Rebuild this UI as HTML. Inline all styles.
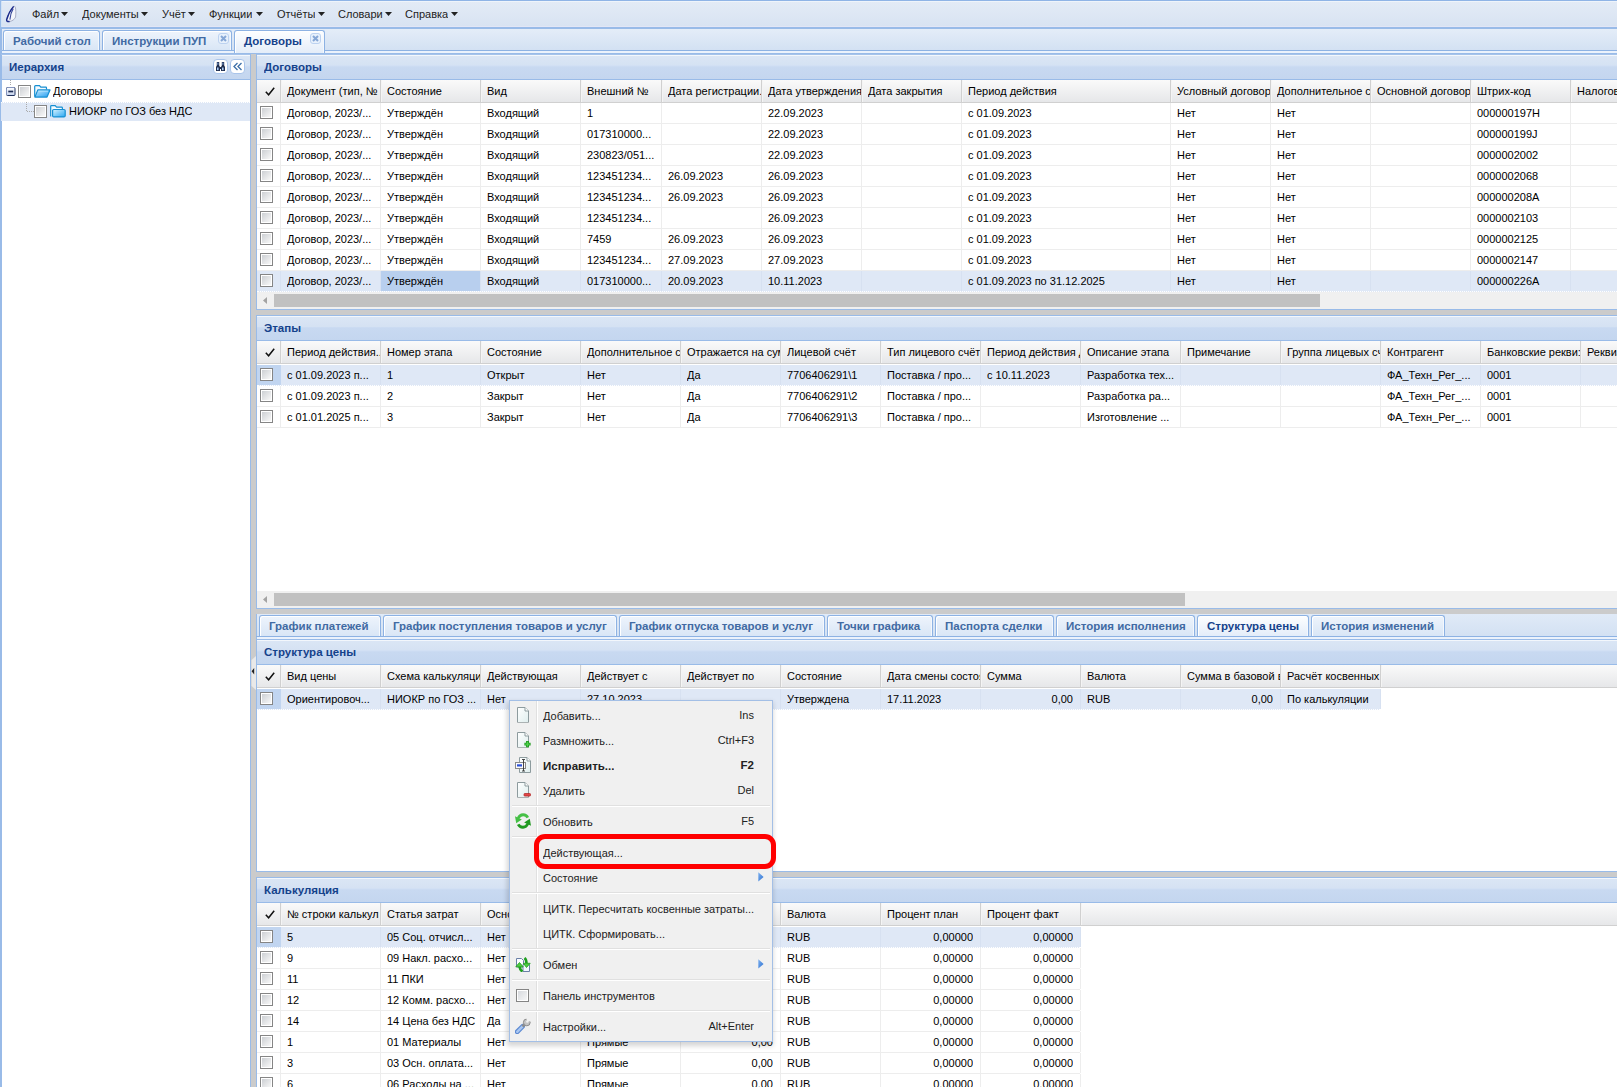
<!DOCTYPE html><html><head><meta charset="utf-8"><style>
*{box-sizing:border-box}
html,body{margin:0;padding:0}
body{width:1617px;height:1087px;overflow:hidden;position:relative;background:#cbcbcb;font-family:"Liberation Sans",sans-serif;font-size:11px;color:#000}
.a{position:absolute;overflow:hidden}
.t{position:absolute;white-space:nowrap;overflow:hidden}
.ph{background:linear-gradient(#dbe6f5 0,#d5e2f3 10.5px,#d2e0f4 10.5px,#c8d9f1 12px,#c4d6ef 100%);border-bottom:1px solid #99bbe8;box-shadow:inset 0 1px 0 #f3f7fc}
.ptitle{font-weight:bold;font-size:11.5px;color:#15428b}
.gh{background:linear-gradient(#fafafa,#e6e7e9);border-bottom:1px solid #d0d0d0}
.cb{position:absolute;width:13px;height:13px;border:1px solid #858585;background:linear-gradient(135deg,#cdd0d4 10%,#f8f8f8 90%);box-shadow:inset 0 0 0 1px #fff}
.tab{position:absolute;border:1px solid #8db2e3;border-bottom:none;border-radius:3px 3px 0 0;background:linear-gradient(#eef4fc,#d9e6f6);box-shadow:inset 1px 1px 0 #fff,inset -1px 0 0 #f4f8fd}
.tabt{position:absolute;font-weight:bold;font-size:11.5px;color:#416aa3;white-space:nowrap}
.sep{position:absolute;height:1px;background:#e0e0e0}
</style></head><body><div class="a" style="left:0px;top:0px;width:1617px;height:27px;background:linear-gradient(#e3ebf6,#d8e3f2);border-top:1px solid #8fb4e6;box-shadow:inset 0 1px 0 #eef4fb,inset 0 -1px 0 #e2e6f6"></div>
<div class="a" style="left:0px;top:27px;width:1617px;height:2px;background:#99bbe8"></div>
<svg class="a" style="left:0;top:0" width="24" height="26" viewBox="0 0 24 26"><path d="M13.8 6.2C11 9 8 14 6.5 20Q6.3 21.9 9 21.6C12 21.2 14.6 19.6 15.6 17C16 13 15.9 9.5 15.3 7.2Q14.9 6 13.8 6.2Z" fill="#f4f6fb" stroke="#a0a6bf" stroke-width="0.9"/><path d="M13.6 6.4C11 9.5 8 14.5 6.6 19.8Q6.4 21.9 9.6 21.5" fill="none" stroke="#1b2b8c" stroke-width="1.4"/><path d="M13.2 8.6C11.6 11.2 10.2 15 9.9 19.6" fill="none" stroke="#3a4b9c" stroke-width="1.1"/></svg>
<div class="t" style="left:32px;top:7px;line-height:14px;color:#222">Файл</div>
<svg class="a" style="left:61px;top:12px" width="7" height="4"><path d="M0 0H7L3.5 4Z" fill="#222"/></svg>
<div class="t" style="left:82px;top:7px;line-height:14px;color:#222">Документы</div>
<svg class="a" style="left:141px;top:12px" width="7" height="4"><path d="M0 0H7L3.5 4Z" fill="#222"/></svg>
<div class="t" style="left:162px;top:7px;line-height:14px;color:#222">Учёт</div>
<svg class="a" style="left:188px;top:12px" width="7" height="4"><path d="M0 0H7L3.5 4Z" fill="#222"/></svg>
<div class="t" style="left:209px;top:7px;line-height:14px;color:#222">Функции</div>
<svg class="a" style="left:256px;top:12px" width="7" height="4"><path d="M0 0H7L3.5 4Z" fill="#222"/></svg>
<div class="t" style="left:277px;top:7px;line-height:14px;color:#222">Отчёты</div>
<svg class="a" style="left:318px;top:12px" width="7" height="4"><path d="M0 0H7L3.5 4Z" fill="#222"/></svg>
<div class="t" style="left:338px;top:7px;line-height:14px;color:#222">Словари</div>
<svg class="a" style="left:385px;top:12px" width="7" height="4"><path d="M0 0H7L3.5 4Z" fill="#222"/></svg>
<div class="t" style="left:405px;top:7px;line-height:14px;color:#222">Справка</div>
<svg class="a" style="left:451px;top:12px" width="7" height="4"><path d="M0 0H7L3.5 4Z" fill="#222"/></svg>
<div class="a" style="left:0px;top:29px;width:1617px;height:21px;background:linear-gradient(#e4edf8,#d3e1f3)"></div>
<div class="a" style="left:0px;top:50px;width:1617px;height:1px;background:#8db2e3"></div>
<div class="a" style="left:0px;top:51px;width:1617px;height:2px;background:#ebf2fc"></div>
<div class="a" style="left:0px;top:53px;width:1617px;height:1px;background:#99bbe8"></div>
<div class="tab" style="left:3px;top:30px;width:97px;height:20px;"></div>
<div class="tabt" style="left:13px;top:34px;line-height:14px;">Рабочий стол</div>
<div class="tab" style="left:102px;top:30px;width:130px;height:20px;"></div>
<div class="tabt" style="left:112px;top:34px;line-height:14px;">Инструкции ПУП</div>
<svg class="a" style="left:218px;top:33px" width="11" height="11"><rect x="0.5" y="0.5" width="10" height="10" rx="2.5" fill="#e8f1fc" stroke="#bcd2f0"/><path d="M3 3L8 8M8 3L3 8" stroke="#86a7d6" stroke-width="2"/></svg>
<div class="tab" style="left:234px;top:30px;width:91px;height:23px;background:linear-gradient(#fdfeff,#e4edf9);"></div>
<div class="tabt" style="left:244px;top:34px;line-height:14px;color:#15428b;">Договоры</div>
<svg class="a" style="left:310px;top:33px" width="11" height="11"><rect x="0.5" y="0.5" width="10" height="10" rx="2.5" fill="#e8f1fc" stroke="#bcd2f0"/><path d="M3 3L8 8M8 3L3 8" stroke="#86a7d6" stroke-width="2"/></svg>
<div class="a" style="left:0px;top:0px;width:2px;height:1087px;background:#99bbe8"></div>
<div class="a" style="left:1px;top:1px;width:1px;height:26px;background:#d2e3f6"></div>
<div class="a" style="left:1px;top:54px;width:249px;height:1px;background:#a6c3ea"></div>
<div class="a ph" style="left:2px;top:55px;width:248px;height:25px;"></div>
<div class="t ptitle" style="left:9px;top:60px;line-height:14px">Иерархия</div>
<div class="a" style="left:213px;top:59px;width:15px;height:15px;background:#fff;border:1px solid #a9c4ea;border-radius:4px"></div>
<div class="a" style="left:230px;top:59px;width:15px;height:15px;background:#fff;border:1px solid #a9c4ea;border-radius:4px"></div>
<svg class="a" style="left:215px;top:61px" width="11" height="11" viewBox="0 0 11 11"><path d="M1.8 1H4.2V4.5L5 6V10H1V6L1.8 4.5Z" fill="#1f2d4d"/><path d="M6.8 1H9.2V4.5L10 6V10H6V6L6.8 4.5Z" fill="#1f2d4d"/><rect x="5" y="6" width="1" height="2" fill="#1f2d4d"/><rect x="2" y="6.5" width="1.6" height="2.6" fill="#a6c8f4"/><rect x="7" y="6.5" width="1.6" height="2.6" fill="#a6c8f4"/><rect x="2.4" y="1.6" width="1" height="2.2" fill="#7fa6e0"/><rect x="7.4" y="1.6" width="1" height="2.2" fill="#7fa6e0"/></svg>
<svg class="a" style="left:233px;top:62px" width="10" height="9" viewBox="0 0 10 9"><path d="M4.5 1L1 4.5L4.5 8M8.5 1L5 4.5L8.5 8" fill="none" stroke="#3d6fa8" stroke-width="1.3"/></svg>
<div class="a" style="left:2px;top:80px;width:248px;height:1007px;background:#fff"></div>
<div class="a" style="left:250px;top:53px;width:1px;height:1034px;background:#99bbe8"></div>
<div class="a" style="left:1px;top:102px;width:249px;height:19px;background:#dfe8f6;border-top:1px dotted #fff"></div>
<svg class="a" style="left:5px;top:80px" width="12" height="20"><defs><linearGradient id="mg" x1="0" y1="0" x2="0" y2="1"><stop offset="0" stop-color="#ffffff"/><stop offset="1" stop-color="#c3d1ec"/></linearGradient></defs><path d="M5.5 0V6" stroke="#aaa" stroke-dasharray="1 1"/><rect x="1.5" y="7.5" width="8.5" height="8" rx="1" fill="url(#mg)" stroke="#22335e"/><path d="M1.5 15V8.5Q1.5 7.5 2.5 7.5H9.5" fill="none" stroke="#8494bd"/><path d="M3.3 11.5H8.2" stroke="#1d2c55" stroke-width="1.7"/></svg>
<div class="cb" style="left:18px;top:85px"></div>
<svg class="a" style="left:34px;top:85px" width="17" height="13" viewBox="0 0 17 13"><defs><linearGradient id="fo" x1="0" y1="0" x2="1" y2="1"><stop offset="0" stop-color="#c6ecff"/><stop offset="1" stop-color="#1f9af0"/></linearGradient></defs><path d="M0.7 11.8V1.5Q0.7 0.7 1.5 0.7H5.5L6.8 2.2H11.8Q12.5 2.2 12.5 3V4.6" fill="#f2faff" stroke="#168fd2" stroke-width="1.2"/><path d="M0.9 12.1L3.8 4.9H16L13 12.1Z" fill="url(#fo)" stroke="#168fd2" stroke-width="1.2" stroke-linejoin="round"/><path d="M4.6 6.2H14" stroke="#b8e6ff" stroke-width="0.8"/></svg>
<div class="t" style="left:53px;top:84px;line-height:14px">Договоры</div>
<svg class="a" style="left:26px;top:102px" width="8" height="12"><path d="M0.5 0V9.5H8" fill="none" stroke="#aaa" stroke-dasharray="1 1"/></svg>
<div class="cb" style="left:34px;top:105px"></div>
<svg class="a" style="left:50px;top:105px" width="16" height="13" viewBox="0 0 16 13"><defs><linearGradient id="fc" x1="0" y1="0" x2="1" y2="1"><stop offset="0" stop-color="#d6f2ff"/><stop offset="1" stop-color="#2aa7f2"/></linearGradient></defs><path d="M0.7 11.5V1.3Q0.7 0.6 1.4 0.6H5.2L6.6 2.1H11.6Q12.4 2.1 12.4 2.9V4.5" fill="#f4fbff" stroke="#168fd2" stroke-width="1.2"/><rect x="2.6" y="4.5" width="12.6" height="7.4" rx="1.2" fill="url(#fc)" stroke="#168fd2" stroke-width="1.2"/></svg>
<div class="t" style="left:69px;top:104px;line-height:14px">НИОКР по ГОЗ без НДС</div>
<div class="a" style="left:256px;top:54px;width:1361px;height:1px;background:#a6c3ea"></div>
<div class="a ph" style="left:257px;top:55px;width:1360px;height:25px;"></div>
<div class="t ptitle" style="left:264px;top:60px;line-height:14px">Договоры</div>
<div class="a" style="left:256px;top:53px;width:1px;height:257px;background:#99bbe8"></div>
<div class="a" style="left:257px;top:80px;width:1360px;height:212px;background:#fff"></div>
<div class="a gh" style="left:257px;top:80px;width:1360px;height:23px;"></div>
<svg class="a" style="left:265px;top:87px" width="10" height="9"><path d="M0.8 4.8L3.6 7.8L9.2 0.8" fill="none" stroke="#111" stroke-width="1.5"/></svg>
<div class="a" style="left:280px;top:80px;width:1px;height:22px;background:#d0d0d0"></div>
<div class="a" style="left:281px;top:80px;width:1px;height:22px;background:#f4f4f4"></div>
<div class="t" style="left:287px;top:80px;width:93px;line-height:22px">Документ (тип, №</div>
<div class="a" style="left:380px;top:80px;width:1px;height:22px;background:#d0d0d0"></div>
<div class="a" style="left:381px;top:80px;width:1px;height:22px;background:#f4f4f4"></div>
<div class="t" style="left:387px;top:80px;width:93px;line-height:22px">Состояние</div>
<div class="a" style="left:480px;top:80px;width:1px;height:22px;background:#d0d0d0"></div>
<div class="a" style="left:481px;top:80px;width:1px;height:22px;background:#f4f4f4"></div>
<div class="t" style="left:487px;top:80px;width:93px;line-height:22px">Вид</div>
<div class="a" style="left:580px;top:80px;width:1px;height:22px;background:#d0d0d0"></div>
<div class="a" style="left:581px;top:80px;width:1px;height:22px;background:#f4f4f4"></div>
<div class="t" style="left:587px;top:80px;width:74px;line-height:22px">Внешний №</div>
<div class="a" style="left:661px;top:80px;width:1px;height:22px;background:#d0d0d0"></div>
<div class="a" style="left:662px;top:80px;width:1px;height:22px;background:#f4f4f4"></div>
<div class="t" style="left:668px;top:80px;width:93px;line-height:22px">Дата регистрации...</div>
<div class="a" style="left:761px;top:80px;width:1px;height:22px;background:#d0d0d0"></div>
<div class="a" style="left:762px;top:80px;width:1px;height:22px;background:#f4f4f4"></div>
<div class="t" style="left:768px;top:80px;width:93px;line-height:22px">Дата утверждения</div>
<div class="a" style="left:861px;top:80px;width:1px;height:22px;background:#d0d0d0"></div>
<div class="a" style="left:862px;top:80px;width:1px;height:22px;background:#f4f4f4"></div>
<div class="t" style="left:868px;top:80px;width:93px;line-height:22px">Дата закрытия</div>
<div class="a" style="left:961px;top:80px;width:1px;height:22px;background:#d0d0d0"></div>
<div class="a" style="left:962px;top:80px;width:1px;height:22px;background:#f4f4f4"></div>
<div class="t" style="left:968px;top:80px;width:202px;line-height:22px">Период действия</div>
<div class="a" style="left:1170px;top:80px;width:1px;height:22px;background:#d0d0d0"></div>
<div class="a" style="left:1171px;top:80px;width:1px;height:22px;background:#f4f4f4"></div>
<div class="t" style="left:1177px;top:80px;width:93px;line-height:22px">Условный договор</div>
<div class="a" style="left:1270px;top:80px;width:1px;height:22px;background:#d0d0d0"></div>
<div class="a" style="left:1271px;top:80px;width:1px;height:22px;background:#f4f4f4"></div>
<div class="t" style="left:1277px;top:80px;width:93px;line-height:22px">Дополнительное с</div>
<div class="a" style="left:1370px;top:80px;width:1px;height:22px;background:#d0d0d0"></div>
<div class="a" style="left:1371px;top:80px;width:1px;height:22px;background:#f4f4f4"></div>
<div class="t" style="left:1377px;top:80px;width:93px;line-height:22px">Основной договор</div>
<div class="a" style="left:1470px;top:80px;width:1px;height:22px;background:#d0d0d0"></div>
<div class="a" style="left:1471px;top:80px;width:1px;height:22px;background:#f4f4f4"></div>
<div class="t" style="left:1477px;top:80px;width:93px;line-height:22px">Штрих-код</div>
<div class="a" style="left:1570px;top:80px;width:1px;height:22px;background:#d0d0d0"></div>
<div class="a" style="left:1571px;top:80px;width:1px;height:22px;background:#f4f4f4"></div>
<div class="t" style="left:1577px;top:80px;width:93px;line-height:22px">Налоговый</div>
<div class="a" style="left:257px;top:103px;width:1360px;height:21px;background:#fff;border-top:1px solid #fff;border-bottom:1px solid #ededed;"></div>
<div class="cb" style="left:260px;top:106px"></div>
<div class="a" style="left:380px;top:103px;width:1px;height:20px;background:#ededed"></div>
<div class="t" style="left:287px;top:104px;width:94px;line-height:19px">Договор, 2023/...</div>
<div class="a" style="left:480px;top:103px;width:1px;height:20px;background:#ededed"></div>
<div class="t" style="left:387px;top:104px;width:94px;line-height:19px">Утверждён</div>
<div class="a" style="left:580px;top:103px;width:1px;height:20px;background:#ededed"></div>
<div class="t" style="left:487px;top:104px;width:94px;line-height:19px">Входящий</div>
<div class="a" style="left:661px;top:103px;width:1px;height:20px;background:#ededed"></div>
<div class="t" style="left:587px;top:104px;width:75px;line-height:19px">1</div>
<div class="a" style="left:761px;top:103px;width:1px;height:20px;background:#ededed"></div>
<div class="a" style="left:861px;top:103px;width:1px;height:20px;background:#ededed"></div>
<div class="t" style="left:768px;top:104px;width:94px;line-height:19px">22.09.2023</div>
<div class="a" style="left:961px;top:103px;width:1px;height:20px;background:#ededed"></div>
<div class="a" style="left:1170px;top:103px;width:1px;height:20px;background:#ededed"></div>
<div class="t" style="left:968px;top:104px;width:203px;line-height:19px">с 01.09.2023</div>
<div class="a" style="left:1270px;top:103px;width:1px;height:20px;background:#ededed"></div>
<div class="t" style="left:1177px;top:104px;width:94px;line-height:19px">Нет</div>
<div class="a" style="left:1370px;top:103px;width:1px;height:20px;background:#ededed"></div>
<div class="t" style="left:1277px;top:104px;width:94px;line-height:19px">Нет</div>
<div class="a" style="left:1470px;top:103px;width:1px;height:20px;background:#ededed"></div>
<div class="a" style="left:1570px;top:103px;width:1px;height:20px;background:#ededed"></div>
<div class="t" style="left:1477px;top:104px;width:94px;line-height:19px">000000197H</div>
<div class="a" style="left:280px;top:103px;width:1px;height:20px;background:#ededed"></div>
<div class="a" style="left:257px;top:124px;width:1360px;height:21px;background:#fff;border-top:1px solid #fff;border-bottom:1px solid #ededed;"></div>
<div class="cb" style="left:260px;top:127px"></div>
<div class="a" style="left:380px;top:124px;width:1px;height:20px;background:#ededed"></div>
<div class="t" style="left:287px;top:125px;width:94px;line-height:19px">Договор, 2023/...</div>
<div class="a" style="left:480px;top:124px;width:1px;height:20px;background:#ededed"></div>
<div class="t" style="left:387px;top:125px;width:94px;line-height:19px">Утверждён</div>
<div class="a" style="left:580px;top:124px;width:1px;height:20px;background:#ededed"></div>
<div class="t" style="left:487px;top:125px;width:94px;line-height:19px">Входящий</div>
<div class="a" style="left:661px;top:124px;width:1px;height:20px;background:#ededed"></div>
<div class="t" style="left:587px;top:125px;width:75px;line-height:19px">017310000...</div>
<div class="a" style="left:761px;top:124px;width:1px;height:20px;background:#ededed"></div>
<div class="a" style="left:861px;top:124px;width:1px;height:20px;background:#ededed"></div>
<div class="t" style="left:768px;top:125px;width:94px;line-height:19px">22.09.2023</div>
<div class="a" style="left:961px;top:124px;width:1px;height:20px;background:#ededed"></div>
<div class="a" style="left:1170px;top:124px;width:1px;height:20px;background:#ededed"></div>
<div class="t" style="left:968px;top:125px;width:203px;line-height:19px">с 01.09.2023</div>
<div class="a" style="left:1270px;top:124px;width:1px;height:20px;background:#ededed"></div>
<div class="t" style="left:1177px;top:125px;width:94px;line-height:19px">Нет</div>
<div class="a" style="left:1370px;top:124px;width:1px;height:20px;background:#ededed"></div>
<div class="t" style="left:1277px;top:125px;width:94px;line-height:19px">Нет</div>
<div class="a" style="left:1470px;top:124px;width:1px;height:20px;background:#ededed"></div>
<div class="a" style="left:1570px;top:124px;width:1px;height:20px;background:#ededed"></div>
<div class="t" style="left:1477px;top:125px;width:94px;line-height:19px">000000199J</div>
<div class="a" style="left:280px;top:124px;width:1px;height:20px;background:#ededed"></div>
<div class="a" style="left:257px;top:145px;width:1360px;height:21px;background:#fff;border-top:1px solid #fff;border-bottom:1px solid #ededed;"></div>
<div class="cb" style="left:260px;top:148px"></div>
<div class="a" style="left:380px;top:145px;width:1px;height:20px;background:#ededed"></div>
<div class="t" style="left:287px;top:146px;width:94px;line-height:19px">Договор, 2023/...</div>
<div class="a" style="left:480px;top:145px;width:1px;height:20px;background:#ededed"></div>
<div class="t" style="left:387px;top:146px;width:94px;line-height:19px">Утверждён</div>
<div class="a" style="left:580px;top:145px;width:1px;height:20px;background:#ededed"></div>
<div class="t" style="left:487px;top:146px;width:94px;line-height:19px">Входящий</div>
<div class="a" style="left:661px;top:145px;width:1px;height:20px;background:#ededed"></div>
<div class="t" style="left:587px;top:146px;width:75px;line-height:19px">230823/051...</div>
<div class="a" style="left:761px;top:145px;width:1px;height:20px;background:#ededed"></div>
<div class="a" style="left:861px;top:145px;width:1px;height:20px;background:#ededed"></div>
<div class="t" style="left:768px;top:146px;width:94px;line-height:19px">22.09.2023</div>
<div class="a" style="left:961px;top:145px;width:1px;height:20px;background:#ededed"></div>
<div class="a" style="left:1170px;top:145px;width:1px;height:20px;background:#ededed"></div>
<div class="t" style="left:968px;top:146px;width:203px;line-height:19px">с 01.09.2023</div>
<div class="a" style="left:1270px;top:145px;width:1px;height:20px;background:#ededed"></div>
<div class="t" style="left:1177px;top:146px;width:94px;line-height:19px">Нет</div>
<div class="a" style="left:1370px;top:145px;width:1px;height:20px;background:#ededed"></div>
<div class="t" style="left:1277px;top:146px;width:94px;line-height:19px">Нет</div>
<div class="a" style="left:1470px;top:145px;width:1px;height:20px;background:#ededed"></div>
<div class="a" style="left:1570px;top:145px;width:1px;height:20px;background:#ededed"></div>
<div class="t" style="left:1477px;top:146px;width:94px;line-height:19px">0000002002</div>
<div class="a" style="left:280px;top:145px;width:1px;height:20px;background:#ededed"></div>
<div class="a" style="left:257px;top:166px;width:1360px;height:21px;background:#fff;border-top:1px solid #fff;border-bottom:1px solid #ededed;"></div>
<div class="cb" style="left:260px;top:169px"></div>
<div class="a" style="left:380px;top:166px;width:1px;height:20px;background:#ededed"></div>
<div class="t" style="left:287px;top:167px;width:94px;line-height:19px">Договор, 2023/...</div>
<div class="a" style="left:480px;top:166px;width:1px;height:20px;background:#ededed"></div>
<div class="t" style="left:387px;top:167px;width:94px;line-height:19px">Утверждён</div>
<div class="a" style="left:580px;top:166px;width:1px;height:20px;background:#ededed"></div>
<div class="t" style="left:487px;top:167px;width:94px;line-height:19px">Входящий</div>
<div class="a" style="left:661px;top:166px;width:1px;height:20px;background:#ededed"></div>
<div class="t" style="left:587px;top:167px;width:75px;line-height:19px">123451234...</div>
<div class="a" style="left:761px;top:166px;width:1px;height:20px;background:#ededed"></div>
<div class="t" style="left:668px;top:167px;width:94px;line-height:19px">26.09.2023</div>
<div class="a" style="left:861px;top:166px;width:1px;height:20px;background:#ededed"></div>
<div class="t" style="left:768px;top:167px;width:94px;line-height:19px">26.09.2023</div>
<div class="a" style="left:961px;top:166px;width:1px;height:20px;background:#ededed"></div>
<div class="a" style="left:1170px;top:166px;width:1px;height:20px;background:#ededed"></div>
<div class="t" style="left:968px;top:167px;width:203px;line-height:19px">с 01.09.2023</div>
<div class="a" style="left:1270px;top:166px;width:1px;height:20px;background:#ededed"></div>
<div class="t" style="left:1177px;top:167px;width:94px;line-height:19px">Нет</div>
<div class="a" style="left:1370px;top:166px;width:1px;height:20px;background:#ededed"></div>
<div class="t" style="left:1277px;top:167px;width:94px;line-height:19px">Нет</div>
<div class="a" style="left:1470px;top:166px;width:1px;height:20px;background:#ededed"></div>
<div class="a" style="left:1570px;top:166px;width:1px;height:20px;background:#ededed"></div>
<div class="t" style="left:1477px;top:167px;width:94px;line-height:19px">0000002068</div>
<div class="a" style="left:280px;top:166px;width:1px;height:20px;background:#ededed"></div>
<div class="a" style="left:257px;top:187px;width:1360px;height:21px;background:#fff;border-top:1px solid #fff;border-bottom:1px solid #ededed;"></div>
<div class="cb" style="left:260px;top:190px"></div>
<div class="a" style="left:380px;top:187px;width:1px;height:20px;background:#ededed"></div>
<div class="t" style="left:287px;top:188px;width:94px;line-height:19px">Договор, 2023/...</div>
<div class="a" style="left:480px;top:187px;width:1px;height:20px;background:#ededed"></div>
<div class="t" style="left:387px;top:188px;width:94px;line-height:19px">Утверждён</div>
<div class="a" style="left:580px;top:187px;width:1px;height:20px;background:#ededed"></div>
<div class="t" style="left:487px;top:188px;width:94px;line-height:19px">Входящий</div>
<div class="a" style="left:661px;top:187px;width:1px;height:20px;background:#ededed"></div>
<div class="t" style="left:587px;top:188px;width:75px;line-height:19px">123451234...</div>
<div class="a" style="left:761px;top:187px;width:1px;height:20px;background:#ededed"></div>
<div class="t" style="left:668px;top:188px;width:94px;line-height:19px">26.09.2023</div>
<div class="a" style="left:861px;top:187px;width:1px;height:20px;background:#ededed"></div>
<div class="t" style="left:768px;top:188px;width:94px;line-height:19px">26.09.2023</div>
<div class="a" style="left:961px;top:187px;width:1px;height:20px;background:#ededed"></div>
<div class="a" style="left:1170px;top:187px;width:1px;height:20px;background:#ededed"></div>
<div class="t" style="left:968px;top:188px;width:203px;line-height:19px">с 01.09.2023</div>
<div class="a" style="left:1270px;top:187px;width:1px;height:20px;background:#ededed"></div>
<div class="t" style="left:1177px;top:188px;width:94px;line-height:19px">Нет</div>
<div class="a" style="left:1370px;top:187px;width:1px;height:20px;background:#ededed"></div>
<div class="t" style="left:1277px;top:188px;width:94px;line-height:19px">Нет</div>
<div class="a" style="left:1470px;top:187px;width:1px;height:20px;background:#ededed"></div>
<div class="a" style="left:1570px;top:187px;width:1px;height:20px;background:#ededed"></div>
<div class="t" style="left:1477px;top:188px;width:94px;line-height:19px">000000208A</div>
<div class="a" style="left:280px;top:187px;width:1px;height:20px;background:#ededed"></div>
<div class="a" style="left:257px;top:208px;width:1360px;height:21px;background:#fff;border-top:1px solid #fff;border-bottom:1px solid #ededed;"></div>
<div class="cb" style="left:260px;top:211px"></div>
<div class="a" style="left:380px;top:208px;width:1px;height:20px;background:#ededed"></div>
<div class="t" style="left:287px;top:209px;width:94px;line-height:19px">Договор, 2023/...</div>
<div class="a" style="left:480px;top:208px;width:1px;height:20px;background:#ededed"></div>
<div class="t" style="left:387px;top:209px;width:94px;line-height:19px">Утверждён</div>
<div class="a" style="left:580px;top:208px;width:1px;height:20px;background:#ededed"></div>
<div class="t" style="left:487px;top:209px;width:94px;line-height:19px">Входящий</div>
<div class="a" style="left:661px;top:208px;width:1px;height:20px;background:#ededed"></div>
<div class="t" style="left:587px;top:209px;width:75px;line-height:19px">123451234...</div>
<div class="a" style="left:761px;top:208px;width:1px;height:20px;background:#ededed"></div>
<div class="a" style="left:861px;top:208px;width:1px;height:20px;background:#ededed"></div>
<div class="t" style="left:768px;top:209px;width:94px;line-height:19px">26.09.2023</div>
<div class="a" style="left:961px;top:208px;width:1px;height:20px;background:#ededed"></div>
<div class="a" style="left:1170px;top:208px;width:1px;height:20px;background:#ededed"></div>
<div class="t" style="left:968px;top:209px;width:203px;line-height:19px">с 01.09.2023</div>
<div class="a" style="left:1270px;top:208px;width:1px;height:20px;background:#ededed"></div>
<div class="t" style="left:1177px;top:209px;width:94px;line-height:19px">Нет</div>
<div class="a" style="left:1370px;top:208px;width:1px;height:20px;background:#ededed"></div>
<div class="t" style="left:1277px;top:209px;width:94px;line-height:19px">Нет</div>
<div class="a" style="left:1470px;top:208px;width:1px;height:20px;background:#ededed"></div>
<div class="a" style="left:1570px;top:208px;width:1px;height:20px;background:#ededed"></div>
<div class="t" style="left:1477px;top:209px;width:94px;line-height:19px">0000002103</div>
<div class="a" style="left:280px;top:208px;width:1px;height:20px;background:#ededed"></div>
<div class="a" style="left:257px;top:229px;width:1360px;height:21px;background:#fff;border-top:1px solid #fff;border-bottom:1px solid #ededed;"></div>
<div class="cb" style="left:260px;top:232px"></div>
<div class="a" style="left:380px;top:229px;width:1px;height:20px;background:#ededed"></div>
<div class="t" style="left:287px;top:230px;width:94px;line-height:19px">Договор, 2023/...</div>
<div class="a" style="left:480px;top:229px;width:1px;height:20px;background:#ededed"></div>
<div class="t" style="left:387px;top:230px;width:94px;line-height:19px">Утверждён</div>
<div class="a" style="left:580px;top:229px;width:1px;height:20px;background:#ededed"></div>
<div class="t" style="left:487px;top:230px;width:94px;line-height:19px">Входящий</div>
<div class="a" style="left:661px;top:229px;width:1px;height:20px;background:#ededed"></div>
<div class="t" style="left:587px;top:230px;width:75px;line-height:19px">7459</div>
<div class="a" style="left:761px;top:229px;width:1px;height:20px;background:#ededed"></div>
<div class="t" style="left:668px;top:230px;width:94px;line-height:19px">26.09.2023</div>
<div class="a" style="left:861px;top:229px;width:1px;height:20px;background:#ededed"></div>
<div class="t" style="left:768px;top:230px;width:94px;line-height:19px">26.09.2023</div>
<div class="a" style="left:961px;top:229px;width:1px;height:20px;background:#ededed"></div>
<div class="a" style="left:1170px;top:229px;width:1px;height:20px;background:#ededed"></div>
<div class="t" style="left:968px;top:230px;width:203px;line-height:19px">с 01.09.2023</div>
<div class="a" style="left:1270px;top:229px;width:1px;height:20px;background:#ededed"></div>
<div class="t" style="left:1177px;top:230px;width:94px;line-height:19px">Нет</div>
<div class="a" style="left:1370px;top:229px;width:1px;height:20px;background:#ededed"></div>
<div class="t" style="left:1277px;top:230px;width:94px;line-height:19px">Нет</div>
<div class="a" style="left:1470px;top:229px;width:1px;height:20px;background:#ededed"></div>
<div class="a" style="left:1570px;top:229px;width:1px;height:20px;background:#ededed"></div>
<div class="t" style="left:1477px;top:230px;width:94px;line-height:19px">0000002125</div>
<div class="a" style="left:280px;top:229px;width:1px;height:20px;background:#ededed"></div>
<div class="a" style="left:257px;top:250px;width:1360px;height:21px;background:#fff;border-top:1px solid #fff;border-bottom:1px solid #ededed;"></div>
<div class="cb" style="left:260px;top:253px"></div>
<div class="a" style="left:380px;top:250px;width:1px;height:20px;background:#ededed"></div>
<div class="t" style="left:287px;top:251px;width:94px;line-height:19px">Договор, 2023/...</div>
<div class="a" style="left:480px;top:250px;width:1px;height:20px;background:#ededed"></div>
<div class="t" style="left:387px;top:251px;width:94px;line-height:19px">Утверждён</div>
<div class="a" style="left:580px;top:250px;width:1px;height:20px;background:#ededed"></div>
<div class="t" style="left:487px;top:251px;width:94px;line-height:19px">Входящий</div>
<div class="a" style="left:661px;top:250px;width:1px;height:20px;background:#ededed"></div>
<div class="t" style="left:587px;top:251px;width:75px;line-height:19px">123451234...</div>
<div class="a" style="left:761px;top:250px;width:1px;height:20px;background:#ededed"></div>
<div class="t" style="left:668px;top:251px;width:94px;line-height:19px">27.09.2023</div>
<div class="a" style="left:861px;top:250px;width:1px;height:20px;background:#ededed"></div>
<div class="t" style="left:768px;top:251px;width:94px;line-height:19px">27.09.2023</div>
<div class="a" style="left:961px;top:250px;width:1px;height:20px;background:#ededed"></div>
<div class="a" style="left:1170px;top:250px;width:1px;height:20px;background:#ededed"></div>
<div class="t" style="left:968px;top:251px;width:203px;line-height:19px">с 01.09.2023</div>
<div class="a" style="left:1270px;top:250px;width:1px;height:20px;background:#ededed"></div>
<div class="t" style="left:1177px;top:251px;width:94px;line-height:19px">Нет</div>
<div class="a" style="left:1370px;top:250px;width:1px;height:20px;background:#ededed"></div>
<div class="t" style="left:1277px;top:251px;width:94px;line-height:19px">Нет</div>
<div class="a" style="left:1470px;top:250px;width:1px;height:20px;background:#ededed"></div>
<div class="a" style="left:1570px;top:250px;width:1px;height:20px;background:#ededed"></div>
<div class="t" style="left:1477px;top:251px;width:94px;line-height:19px">0000002147</div>
<div class="a" style="left:280px;top:250px;width:1px;height:20px;background:#ededed"></div>
<div class="a" style="left:257px;top:271px;width:1360px;height:21px;background:#dfe8f6;border-top:1px solid #dfe8f6;border-bottom:1px dotted #fff;"></div>
<div class="a" style="left:381px;top:271px;width:99px;height:20px;background:#b8cfee"></div>
<div class="cb" style="left:260px;top:274px"></div>
<div class="a" style="left:380px;top:271px;width:1px;height:20px;background:#d7e1f1"></div>
<div class="t" style="left:287px;top:272px;width:94px;line-height:19px">Договор, 2023/...</div>
<div class="a" style="left:480px;top:271px;width:1px;height:20px;background:#d7e1f1"></div>
<div class="t" style="left:387px;top:272px;width:94px;line-height:19px">Утверждён</div>
<div class="a" style="left:580px;top:271px;width:1px;height:20px;background:#d7e1f1"></div>
<div class="t" style="left:487px;top:272px;width:94px;line-height:19px">Входящий</div>
<div class="a" style="left:661px;top:271px;width:1px;height:20px;background:#d7e1f1"></div>
<div class="t" style="left:587px;top:272px;width:75px;line-height:19px">017310000...</div>
<div class="a" style="left:761px;top:271px;width:1px;height:20px;background:#d7e1f1"></div>
<div class="t" style="left:668px;top:272px;width:94px;line-height:19px">20.09.2023</div>
<div class="a" style="left:861px;top:271px;width:1px;height:20px;background:#d7e1f1"></div>
<div class="t" style="left:768px;top:272px;width:94px;line-height:19px">10.11.2023</div>
<div class="a" style="left:961px;top:271px;width:1px;height:20px;background:#d7e1f1"></div>
<div class="a" style="left:1170px;top:271px;width:1px;height:20px;background:#d7e1f1"></div>
<div class="t" style="left:968px;top:272px;width:203px;line-height:19px">с 01.09.2023 по 31.12.2025</div>
<div class="a" style="left:1270px;top:271px;width:1px;height:20px;background:#d7e1f1"></div>
<div class="t" style="left:1177px;top:272px;width:94px;line-height:19px">Нет</div>
<div class="a" style="left:1370px;top:271px;width:1px;height:20px;background:#d7e1f1"></div>
<div class="t" style="left:1277px;top:272px;width:94px;line-height:19px">Нет</div>
<div class="a" style="left:1470px;top:271px;width:1px;height:20px;background:#d7e1f1"></div>
<div class="a" style="left:1570px;top:271px;width:1px;height:20px;background:#d7e1f1"></div>
<div class="t" style="left:1477px;top:272px;width:94px;line-height:19px">000000226A</div>
<div class="a" style="left:280px;top:271px;width:1px;height:20px;background:#d7e1f1"></div>
<div class="a" style="left:257px;top:292px;width:1360px;height:17px;background:#f0f0f0"></div>
<div class="a" style="left:274px;top:294px;width:1046px;height:13px;background:#c1c1c1"></div>
<svg class="a" style="left:262px;top:297px" width="6" height="8"><path d="M5 0V7L1 3.5Z" fill="#a3a3a3"/></svg>
<div class="a" style="left:256px;top:309px;width:1361px;height:1px;background:#99bbe8"></div>
<div class="a" style="left:256px;top:315px;width:1361px;height:1px;background:#99bbe8"></div>
<div class="a ph" style="left:257px;top:316px;width:1360px;height:25px;"></div>
<div class="t ptitle" style="left:264px;top:321px;line-height:14px">Этапы</div>
<div class="a" style="left:256px;top:315px;width:1px;height:294px;background:#99bbe8"></div>
<div class="a" style="left:257px;top:341px;width:1360px;height:250px;background:#fff"></div>
<div class="a gh" style="left:257px;top:341px;width:1360px;height:23px;"></div>
<svg class="a" style="left:265px;top:348px" width="10" height="9"><path d="M0.8 4.8L3.6 7.8L9.2 0.8" fill="none" stroke="#111" stroke-width="1.5"/></svg>
<div class="a" style="left:280px;top:341px;width:1px;height:22px;background:#d0d0d0"></div>
<div class="a" style="left:281px;top:341px;width:1px;height:22px;background:#f4f4f4"></div>
<div class="t" style="left:287px;top:341px;width:93px;line-height:22px">Период действия...</div>
<div class="a" style="left:380px;top:341px;width:1px;height:22px;background:#d0d0d0"></div>
<div class="a" style="left:381px;top:341px;width:1px;height:22px;background:#f4f4f4"></div>
<div class="t" style="left:387px;top:341px;width:93px;line-height:22px">Номер этапа</div>
<div class="a" style="left:480px;top:341px;width:1px;height:22px;background:#d0d0d0"></div>
<div class="a" style="left:481px;top:341px;width:1px;height:22px;background:#f4f4f4"></div>
<div class="t" style="left:487px;top:341px;width:93px;line-height:22px">Состояние</div>
<div class="a" style="left:580px;top:341px;width:1px;height:22px;background:#d0d0d0"></div>
<div class="a" style="left:581px;top:341px;width:1px;height:22px;background:#f4f4f4"></div>
<div class="t" style="left:587px;top:341px;width:93px;line-height:22px">Дополнительное с</div>
<div class="a" style="left:680px;top:341px;width:1px;height:22px;background:#d0d0d0"></div>
<div class="a" style="left:681px;top:341px;width:1px;height:22px;background:#f4f4f4"></div>
<div class="t" style="left:687px;top:341px;width:93px;line-height:22px">Отражается на сум</div>
<div class="a" style="left:780px;top:341px;width:1px;height:22px;background:#d0d0d0"></div>
<div class="a" style="left:781px;top:341px;width:1px;height:22px;background:#f4f4f4"></div>
<div class="t" style="left:787px;top:341px;width:93px;line-height:22px">Лицевой счёт</div>
<div class="a" style="left:880px;top:341px;width:1px;height:22px;background:#d0d0d0"></div>
<div class="a" style="left:881px;top:341px;width:1px;height:22px;background:#f4f4f4"></div>
<div class="t" style="left:887px;top:341px;width:93px;line-height:22px">Тип лицевого счёт</div>
<div class="a" style="left:980px;top:341px;width:1px;height:22px;background:#d0d0d0"></div>
<div class="a" style="left:981px;top:341px;width:1px;height:22px;background:#f4f4f4"></div>
<div class="t" style="left:987px;top:341px;width:93px;line-height:22px">Период действия д</div>
<div class="a" style="left:1080px;top:341px;width:1px;height:22px;background:#d0d0d0"></div>
<div class="a" style="left:1081px;top:341px;width:1px;height:22px;background:#f4f4f4"></div>
<div class="t" style="left:1087px;top:341px;width:93px;line-height:22px">Описание этапа</div>
<div class="a" style="left:1180px;top:341px;width:1px;height:22px;background:#d0d0d0"></div>
<div class="a" style="left:1181px;top:341px;width:1px;height:22px;background:#f4f4f4"></div>
<div class="t" style="left:1187px;top:341px;width:93px;line-height:22px">Примечание</div>
<div class="a" style="left:1280px;top:341px;width:1px;height:22px;background:#d0d0d0"></div>
<div class="a" style="left:1281px;top:341px;width:1px;height:22px;background:#f4f4f4"></div>
<div class="t" style="left:1287px;top:341px;width:93px;line-height:22px">Группа лицевых сч</div>
<div class="a" style="left:1380px;top:341px;width:1px;height:22px;background:#d0d0d0"></div>
<div class="a" style="left:1381px;top:341px;width:1px;height:22px;background:#f4f4f4"></div>
<div class="t" style="left:1387px;top:341px;width:93px;line-height:22px">Контрагент</div>
<div class="a" style="left:1480px;top:341px;width:1px;height:22px;background:#d0d0d0"></div>
<div class="a" style="left:1481px;top:341px;width:1px;height:22px;background:#f4f4f4"></div>
<div class="t" style="left:1487px;top:341px;width:93px;line-height:22px">Банковские рекви:</div>
<div class="a" style="left:1580px;top:341px;width:1px;height:22px;background:#d0d0d0"></div>
<div class="a" style="left:1581px;top:341px;width:1px;height:22px;background:#f4f4f4"></div>
<div class="t" style="left:1587px;top:341px;width:93px;line-height:22px">Реквизиты</div>
<div class="a" style="left:257px;top:365px;width:1360px;height:21px;background:#dfe8f6;border-top:1px solid #dfe8f6;border-bottom:1px dotted #fff;"></div>
<div class="a" style="left:257px;top:365px;width:23px;height:20px;background:#c1d5f0"></div>
<div class="cb" style="left:260px;top:368px"></div>
<div class="a" style="left:380px;top:365px;width:1px;height:20px;background:#d7e1f1"></div>
<div class="t" style="left:287px;top:366px;width:94px;line-height:19px">с 01.09.2023 п...</div>
<div class="a" style="left:480px;top:365px;width:1px;height:20px;background:#d7e1f1"></div>
<div class="t" style="left:387px;top:366px;width:94px;line-height:19px">1</div>
<div class="a" style="left:580px;top:365px;width:1px;height:20px;background:#d7e1f1"></div>
<div class="t" style="left:487px;top:366px;width:94px;line-height:19px">Открыт</div>
<div class="a" style="left:680px;top:365px;width:1px;height:20px;background:#d7e1f1"></div>
<div class="t" style="left:587px;top:366px;width:94px;line-height:19px">Нет</div>
<div class="a" style="left:780px;top:365px;width:1px;height:20px;background:#d7e1f1"></div>
<div class="t" style="left:687px;top:366px;width:94px;line-height:19px">Да</div>
<div class="a" style="left:880px;top:365px;width:1px;height:20px;background:#d7e1f1"></div>
<div class="t" style="left:787px;top:366px;width:94px;line-height:19px">7706406291\1</div>
<div class="a" style="left:980px;top:365px;width:1px;height:20px;background:#d7e1f1"></div>
<div class="t" style="left:887px;top:366px;width:94px;line-height:19px">Поставка / про...</div>
<div class="a" style="left:1080px;top:365px;width:1px;height:20px;background:#d7e1f1"></div>
<div class="t" style="left:987px;top:366px;width:94px;line-height:19px">с 10.11.2023</div>
<div class="a" style="left:1180px;top:365px;width:1px;height:20px;background:#d7e1f1"></div>
<div class="t" style="left:1087px;top:366px;width:94px;line-height:19px">Разработка тех...</div>
<div class="a" style="left:1280px;top:365px;width:1px;height:20px;background:#d7e1f1"></div>
<div class="a" style="left:1380px;top:365px;width:1px;height:20px;background:#d7e1f1"></div>
<div class="a" style="left:1480px;top:365px;width:1px;height:20px;background:#d7e1f1"></div>
<div class="t" style="left:1387px;top:366px;width:94px;line-height:19px">ФА_Техн_Рег_...</div>
<div class="a" style="left:1580px;top:365px;width:1px;height:20px;background:#d7e1f1"></div>
<div class="t" style="left:1487px;top:366px;width:94px;line-height:19px">0001</div>
<div class="a" style="left:280px;top:365px;width:1px;height:20px;background:#c1d5f0"></div>
<div class="a" style="left:257px;top:386px;width:1360px;height:21px;background:#fff;border-top:1px solid #fff;border-bottom:1px solid #ededed;"></div>
<div class="cb" style="left:260px;top:389px"></div>
<div class="a" style="left:380px;top:386px;width:1px;height:20px;background:#ededed"></div>
<div class="t" style="left:287px;top:387px;width:94px;line-height:19px">с 01.09.2023 п...</div>
<div class="a" style="left:480px;top:386px;width:1px;height:20px;background:#ededed"></div>
<div class="t" style="left:387px;top:387px;width:94px;line-height:19px">2</div>
<div class="a" style="left:580px;top:386px;width:1px;height:20px;background:#ededed"></div>
<div class="t" style="left:487px;top:387px;width:94px;line-height:19px">Закрыт</div>
<div class="a" style="left:680px;top:386px;width:1px;height:20px;background:#ededed"></div>
<div class="t" style="left:587px;top:387px;width:94px;line-height:19px">Нет</div>
<div class="a" style="left:780px;top:386px;width:1px;height:20px;background:#ededed"></div>
<div class="t" style="left:687px;top:387px;width:94px;line-height:19px">Да</div>
<div class="a" style="left:880px;top:386px;width:1px;height:20px;background:#ededed"></div>
<div class="t" style="left:787px;top:387px;width:94px;line-height:19px">7706406291\2</div>
<div class="a" style="left:980px;top:386px;width:1px;height:20px;background:#ededed"></div>
<div class="t" style="left:887px;top:387px;width:94px;line-height:19px">Поставка / про...</div>
<div class="a" style="left:1080px;top:386px;width:1px;height:20px;background:#ededed"></div>
<div class="a" style="left:1180px;top:386px;width:1px;height:20px;background:#ededed"></div>
<div class="t" style="left:1087px;top:387px;width:94px;line-height:19px">Разработка ра...</div>
<div class="a" style="left:1280px;top:386px;width:1px;height:20px;background:#ededed"></div>
<div class="a" style="left:1380px;top:386px;width:1px;height:20px;background:#ededed"></div>
<div class="a" style="left:1480px;top:386px;width:1px;height:20px;background:#ededed"></div>
<div class="t" style="left:1387px;top:387px;width:94px;line-height:19px">ФА_Техн_Рег_...</div>
<div class="a" style="left:1580px;top:386px;width:1px;height:20px;background:#ededed"></div>
<div class="t" style="left:1487px;top:387px;width:94px;line-height:19px">0001</div>
<div class="a" style="left:280px;top:386px;width:1px;height:20px;background:#ededed"></div>
<div class="a" style="left:257px;top:407px;width:1360px;height:21px;background:#fff;border-top:1px solid #fff;border-bottom:1px solid #ededed;"></div>
<div class="cb" style="left:260px;top:410px"></div>
<div class="a" style="left:380px;top:407px;width:1px;height:20px;background:#ededed"></div>
<div class="t" style="left:287px;top:408px;width:94px;line-height:19px">с 01.01.2025 п...</div>
<div class="a" style="left:480px;top:407px;width:1px;height:20px;background:#ededed"></div>
<div class="t" style="left:387px;top:408px;width:94px;line-height:19px">3</div>
<div class="a" style="left:580px;top:407px;width:1px;height:20px;background:#ededed"></div>
<div class="t" style="left:487px;top:408px;width:94px;line-height:19px">Закрыт</div>
<div class="a" style="left:680px;top:407px;width:1px;height:20px;background:#ededed"></div>
<div class="t" style="left:587px;top:408px;width:94px;line-height:19px">Нет</div>
<div class="a" style="left:780px;top:407px;width:1px;height:20px;background:#ededed"></div>
<div class="t" style="left:687px;top:408px;width:94px;line-height:19px">Да</div>
<div class="a" style="left:880px;top:407px;width:1px;height:20px;background:#ededed"></div>
<div class="t" style="left:787px;top:408px;width:94px;line-height:19px">7706406291\3</div>
<div class="a" style="left:980px;top:407px;width:1px;height:20px;background:#ededed"></div>
<div class="t" style="left:887px;top:408px;width:94px;line-height:19px">Поставка / про...</div>
<div class="a" style="left:1080px;top:407px;width:1px;height:20px;background:#ededed"></div>
<div class="a" style="left:1180px;top:407px;width:1px;height:20px;background:#ededed"></div>
<div class="t" style="left:1087px;top:408px;width:94px;line-height:19px">Изготовление ...</div>
<div class="a" style="left:1280px;top:407px;width:1px;height:20px;background:#ededed"></div>
<div class="a" style="left:1380px;top:407px;width:1px;height:20px;background:#ededed"></div>
<div class="a" style="left:1480px;top:407px;width:1px;height:20px;background:#ededed"></div>
<div class="t" style="left:1387px;top:408px;width:94px;line-height:19px">ФА_Техн_Рег_...</div>
<div class="a" style="left:1580px;top:407px;width:1px;height:20px;background:#ededed"></div>
<div class="t" style="left:1487px;top:408px;width:94px;line-height:19px">0001</div>
<div class="a" style="left:280px;top:407px;width:1px;height:20px;background:#ededed"></div>
<div class="a" style="left:257px;top:591px;width:1360px;height:17px;background:#f0f0f0"></div>
<div class="a" style="left:274px;top:593px;width:911px;height:13px;background:#c1c1c1"></div>
<svg class="a" style="left:262px;top:596px" width="6" height="8"><path d="M5 0V7L1 3.5Z" fill="#a3a3a3"/></svg>
<div class="a" style="left:256px;top:608px;width:1361px;height:1px;background:#99bbe8"></div>
<div class="a" style="left:256px;top:614px;width:1361px;height:22px;background:linear-gradient(#e0eaf7,#d3e1f3)"></div>
<div class="a" style="left:256px;top:614px;width:1px;height:258px;background:#99bbe8"></div>
<div class="a" style="left:256px;top:636px;width:1361px;height:1px;background:#8db2e3"></div>
<div class="a" style="left:257px;top:637px;width:1360px;height:2px;background:#ebf2fc"></div>
<div class="tab" style="left:259px;top:615px;width:122px;height:21px;"></div>
<div class="tabt" style="left:269px;top:619px;line-height:14px;">График платежей</div>
<div class="tab" style="left:383px;top:615px;width:234px;height:21px;"></div>
<div class="tabt" style="left:393px;top:619px;line-height:14px;">График поступления товаров и услуг</div>
<div class="tab" style="left:619px;top:615px;width:206px;height:21px;"></div>
<div class="tabt" style="left:629px;top:619px;line-height:14px;">График отпуска товаров и услуг</div>
<div class="tab" style="left:827px;top:615px;width:106px;height:21px;"></div>
<div class="tabt" style="left:837px;top:619px;line-height:14px;">Точки графика</div>
<div class="tab" style="left:935px;top:615px;width:119px;height:21px;"></div>
<div class="tabt" style="left:945px;top:619px;line-height:14px;">Паспорта сделки</div>
<div class="tab" style="left:1056px;top:615px;width:139px;height:21px;"></div>
<div class="tabt" style="left:1066px;top:619px;line-height:14px;">История исполнения</div>
<div class="tab" style="left:1197px;top:615px;width:112px;height:21px;background:linear-gradient(#fdfeff,#e4edf9);"></div>
<div class="tabt" style="left:1207px;top:619px;line-height:14px;color:#15428b;">Структура цены</div>
<div class="tab" style="left:1311px;top:615px;width:134px;height:21px;"></div>
<div class="tabt" style="left:1321px;top:619px;line-height:14px;">История изменений</div>
<div class="a" style="left:256px;top:639px;width:1361px;height:1px;background:#99bbe8"></div>
<div class="a ph" style="left:257px;top:640px;width:1360px;height:25px;"></div>
<div class="t ptitle" style="left:264px;top:645px;line-height:14px">Структура цены</div>
<div class="a" style="left:257px;top:665px;width:1360px;height:206px;background:#fff"></div>
<div class="a gh" style="left:257px;top:665px;width:1360px;height:23px;"></div>
<svg class="a" style="left:265px;top:672px" width="10" height="9"><path d="M0.8 4.8L3.6 7.8L9.2 0.8" fill="none" stroke="#111" stroke-width="1.5"/></svg>
<div class="a" style="left:280px;top:665px;width:1px;height:22px;background:#d0d0d0"></div>
<div class="a" style="left:281px;top:665px;width:1px;height:22px;background:#f4f4f4"></div>
<div class="t" style="left:287px;top:665px;width:93px;line-height:22px">Вид цены</div>
<div class="a" style="left:380px;top:665px;width:1px;height:22px;background:#d0d0d0"></div>
<div class="a" style="left:381px;top:665px;width:1px;height:22px;background:#f4f4f4"></div>
<div class="t" style="left:387px;top:665px;width:93px;line-height:22px">Схема калькуляци</div>
<div class="a" style="left:480px;top:665px;width:1px;height:22px;background:#d0d0d0"></div>
<div class="a" style="left:481px;top:665px;width:1px;height:22px;background:#f4f4f4"></div>
<div class="t" style="left:487px;top:665px;width:93px;line-height:22px">Действующая</div>
<div class="a" style="left:580px;top:665px;width:1px;height:22px;background:#d0d0d0"></div>
<div class="a" style="left:581px;top:665px;width:1px;height:22px;background:#f4f4f4"></div>
<div class="t" style="left:587px;top:665px;width:93px;line-height:22px">Действует с</div>
<div class="a" style="left:680px;top:665px;width:1px;height:22px;background:#d0d0d0"></div>
<div class="a" style="left:681px;top:665px;width:1px;height:22px;background:#f4f4f4"></div>
<div class="t" style="left:687px;top:665px;width:93px;line-height:22px">Действует по</div>
<div class="a" style="left:780px;top:665px;width:1px;height:22px;background:#d0d0d0"></div>
<div class="a" style="left:781px;top:665px;width:1px;height:22px;background:#f4f4f4"></div>
<div class="t" style="left:787px;top:665px;width:93px;line-height:22px">Состояние</div>
<div class="a" style="left:880px;top:665px;width:1px;height:22px;background:#d0d0d0"></div>
<div class="a" style="left:881px;top:665px;width:1px;height:22px;background:#f4f4f4"></div>
<div class="t" style="left:887px;top:665px;width:93px;line-height:22px">Дата смены состоя</div>
<div class="a" style="left:980px;top:665px;width:1px;height:22px;background:#d0d0d0"></div>
<div class="a" style="left:981px;top:665px;width:1px;height:22px;background:#f4f4f4"></div>
<div class="t" style="left:987px;top:665px;width:93px;line-height:22px">Сумма</div>
<div class="a" style="left:1080px;top:665px;width:1px;height:22px;background:#d0d0d0"></div>
<div class="a" style="left:1081px;top:665px;width:1px;height:22px;background:#f4f4f4"></div>
<div class="t" style="left:1087px;top:665px;width:93px;line-height:22px">Валюта</div>
<div class="a" style="left:1180px;top:665px;width:1px;height:22px;background:#d0d0d0"></div>
<div class="a" style="left:1181px;top:665px;width:1px;height:22px;background:#f4f4f4"></div>
<div class="t" style="left:1187px;top:665px;width:93px;line-height:22px">Сумма в базовой в</div>
<div class="a" style="left:1280px;top:665px;width:1px;height:22px;background:#d0d0d0"></div>
<div class="a" style="left:1281px;top:665px;width:1px;height:22px;background:#f4f4f4"></div>
<div class="t" style="left:1287px;top:665px;width:93px;line-height:22px">Расчёт косвенных</div>
<div class="a" style="left:1380px;top:665px;width:1px;height:22px;background:#d0d0d0"></div>
<div class="a" style="left:1381px;top:665px;width:1px;height:22px;background:#f4f4f4"></div>
<div class="a" style="left:257px;top:689px;width:1123px;height:21px;background:#dfe8f6;border-top:1px solid #dfe8f6;border-bottom:1px dotted #fff;"></div>
<div class="a" style="left:257px;top:689px;width:23px;height:20px;background:#c1d5f0"></div>
<div class="cb" style="left:260px;top:692px"></div>
<div class="a" style="left:380px;top:689px;width:1px;height:20px;background:#d7e1f1"></div>
<div class="t" style="left:287px;top:690px;width:94px;line-height:19px">Ориентировоч...</div>
<div class="a" style="left:480px;top:689px;width:1px;height:20px;background:#d7e1f1"></div>
<div class="t" style="left:387px;top:690px;width:94px;line-height:19px">НИОКР по ГОЗ ...</div>
<div class="a" style="left:580px;top:689px;width:1px;height:20px;background:#d7e1f1"></div>
<div class="t" style="left:487px;top:690px;width:94px;line-height:19px">Нет</div>
<div class="a" style="left:680px;top:689px;width:1px;height:20px;background:#d7e1f1"></div>
<div class="t" style="left:587px;top:690px;width:94px;line-height:19px">27.10.2023</div>
<div class="a" style="left:780px;top:689px;width:1px;height:20px;background:#d7e1f1"></div>
<div class="a" style="left:880px;top:689px;width:1px;height:20px;background:#d7e1f1"></div>
<div class="t" style="left:787px;top:690px;width:94px;line-height:19px">Утверждена</div>
<div class="a" style="left:980px;top:689px;width:1px;height:20px;background:#d7e1f1"></div>
<div class="t" style="left:887px;top:690px;width:94px;line-height:19px">17.11.2023</div>
<div class="a" style="left:1080px;top:689px;width:1px;height:20px;background:#d7e1f1"></div>
<div class="t" style="left:981px;top:690px;width:92px;text-align:right;line-height:19px">0,00</div>
<div class="a" style="left:1180px;top:689px;width:1px;height:20px;background:#d7e1f1"></div>
<div class="t" style="left:1087px;top:690px;width:94px;line-height:19px">RUB</div>
<div class="a" style="left:1280px;top:689px;width:1px;height:20px;background:#d7e1f1"></div>
<div class="t" style="left:1181px;top:690px;width:92px;text-align:right;line-height:19px">0,00</div>
<div class="a" style="left:1380px;top:689px;width:1px;height:20px;background:#d7e1f1"></div>
<div class="t" style="left:1287px;top:690px;width:94px;line-height:19px">По калькуляции</div>
<div class="a" style="left:280px;top:689px;width:1px;height:20px;background:#c1d5f0"></div>
<div class="a" style="left:256px;top:871px;width:1361px;height:1px;background:#99bbe8"></div>
<div class="a" style="left:256px;top:877px;width:1361px;height:1px;background:#99bbe8"></div>
<div class="a ph" style="left:257px;top:878px;width:1360px;height:25px;"></div>
<div class="t ptitle" style="left:264px;top:883px;line-height:14px">Калькуляция</div>
<div class="a" style="left:256px;top:877px;width:1px;height:210px;background:#99bbe8"></div>
<div class="a" style="left:257px;top:903px;width:1360px;height:184px;background:#fff"></div>
<div class="a gh" style="left:257px;top:903px;width:1360px;height:23px;"></div>
<svg class="a" style="left:265px;top:910px" width="10" height="9"><path d="M0.8 4.8L3.6 7.8L9.2 0.8" fill="none" stroke="#111" stroke-width="1.5"/></svg>
<div class="a" style="left:280px;top:903px;width:1px;height:22px;background:#d0d0d0"></div>
<div class="a" style="left:281px;top:903px;width:1px;height:22px;background:#f4f4f4"></div>
<div class="t" style="left:287px;top:903px;width:93px;line-height:22px">№ строки калькул</div>
<div class="a" style="left:380px;top:903px;width:1px;height:22px;background:#d0d0d0"></div>
<div class="a" style="left:381px;top:903px;width:1px;height:22px;background:#f4f4f4"></div>
<div class="t" style="left:387px;top:903px;width:93px;line-height:22px">Статья затрат</div>
<div class="a" style="left:480px;top:903px;width:1px;height:22px;background:#d0d0d0"></div>
<div class="a" style="left:481px;top:903px;width:1px;height:22px;background:#f4f4f4"></div>
<div class="t" style="left:487px;top:903px;width:93px;line-height:22px">Основная</div>
<div class="a" style="left:580px;top:903px;width:1px;height:22px;background:#d0d0d0"></div>
<div class="a" style="left:581px;top:903px;width:1px;height:22px;background:#f4f4f4"></div>
<div class="t" style="left:587px;top:903px;width:93px;line-height:22px">Тип затрат</div>
<div class="a" style="left:680px;top:903px;width:1px;height:22px;background:#d0d0d0"></div>
<div class="a" style="left:681px;top:903px;width:1px;height:22px;background:#f4f4f4"></div>
<div class="t" style="left:687px;top:903px;width:93px;line-height:22px">Сумма</div>
<div class="a" style="left:780px;top:903px;width:1px;height:22px;background:#d0d0d0"></div>
<div class="a" style="left:781px;top:903px;width:1px;height:22px;background:#f4f4f4"></div>
<div class="t" style="left:787px;top:903px;width:93px;line-height:22px">Валюта</div>
<div class="a" style="left:880px;top:903px;width:1px;height:22px;background:#d0d0d0"></div>
<div class="a" style="left:881px;top:903px;width:1px;height:22px;background:#f4f4f4"></div>
<div class="t" style="left:887px;top:903px;width:93px;line-height:22px">Процент план</div>
<div class="a" style="left:980px;top:903px;width:1px;height:22px;background:#d0d0d0"></div>
<div class="a" style="left:981px;top:903px;width:1px;height:22px;background:#f4f4f4"></div>
<div class="t" style="left:987px;top:903px;width:93px;line-height:22px">Процент факт</div>
<div class="a" style="left:1080px;top:903px;width:1px;height:22px;background:#d0d0d0"></div>
<div class="a" style="left:1081px;top:903px;width:1px;height:22px;background:#f4f4f4"></div>
<div class="a" style="left:257px;top:927px;width:823px;height:21px;background:#dfe8f6;border-top:1px solid #dfe8f6;border-bottom:1px dotted #fff;"></div>
<div class="a" style="left:257px;top:927px;width:23px;height:20px;background:#c1d5f0"></div>
<div class="cb" style="left:260px;top:930px"></div>
<div class="a" style="left:380px;top:927px;width:1px;height:20px;background:#d7e1f1"></div>
<div class="t" style="left:287px;top:928px;width:94px;line-height:19px">5</div>
<div class="a" style="left:480px;top:927px;width:1px;height:20px;background:#d7e1f1"></div>
<div class="t" style="left:387px;top:928px;width:94px;line-height:19px">05 Соц. отчисл...</div>
<div class="a" style="left:580px;top:927px;width:1px;height:20px;background:#d7e1f1"></div>
<div class="t" style="left:487px;top:928px;width:94px;line-height:19px">Нет</div>
<div class="a" style="left:680px;top:927px;width:1px;height:20px;background:#d7e1f1"></div>
<div class="t" style="left:587px;top:928px;width:94px;line-height:19px">Косвенные</div>
<div class="a" style="left:780px;top:927px;width:1px;height:20px;background:#d7e1f1"></div>
<div class="t" style="left:681px;top:928px;width:92px;text-align:right;line-height:19px">0,00</div>
<div class="a" style="left:880px;top:927px;width:1px;height:20px;background:#d7e1f1"></div>
<div class="t" style="left:787px;top:928px;width:94px;line-height:19px">RUB</div>
<div class="a" style="left:980px;top:927px;width:1px;height:20px;background:#d7e1f1"></div>
<div class="t" style="left:881px;top:928px;width:92px;text-align:right;line-height:19px">0,00000</div>
<div class="a" style="left:1080px;top:927px;width:1px;height:20px;background:#d7e1f1"></div>
<div class="t" style="left:981px;top:928px;width:92px;text-align:right;line-height:19px">0,00000</div>
<div class="a" style="left:280px;top:927px;width:1px;height:20px;background:#c1d5f0"></div>
<div class="a" style="left:257px;top:948px;width:823px;height:21px;background:#fff;border-top:1px solid #fff;border-bottom:1px solid #ededed;"></div>
<div class="cb" style="left:260px;top:951px"></div>
<div class="a" style="left:380px;top:948px;width:1px;height:20px;background:#ededed"></div>
<div class="t" style="left:287px;top:949px;width:94px;line-height:19px">9</div>
<div class="a" style="left:480px;top:948px;width:1px;height:20px;background:#ededed"></div>
<div class="t" style="left:387px;top:949px;width:94px;line-height:19px">09 Накл. расхо...</div>
<div class="a" style="left:580px;top:948px;width:1px;height:20px;background:#ededed"></div>
<div class="t" style="left:487px;top:949px;width:94px;line-height:19px">Нет</div>
<div class="a" style="left:680px;top:948px;width:1px;height:20px;background:#ededed"></div>
<div class="t" style="left:587px;top:949px;width:94px;line-height:19px">Косвенные</div>
<div class="a" style="left:780px;top:948px;width:1px;height:20px;background:#ededed"></div>
<div class="t" style="left:681px;top:949px;width:92px;text-align:right;line-height:19px">0,00</div>
<div class="a" style="left:880px;top:948px;width:1px;height:20px;background:#ededed"></div>
<div class="t" style="left:787px;top:949px;width:94px;line-height:19px">RUB</div>
<div class="a" style="left:980px;top:948px;width:1px;height:20px;background:#ededed"></div>
<div class="t" style="left:881px;top:949px;width:92px;text-align:right;line-height:19px">0,00000</div>
<div class="a" style="left:1080px;top:948px;width:1px;height:20px;background:#ededed"></div>
<div class="t" style="left:981px;top:949px;width:92px;text-align:right;line-height:19px">0,00000</div>
<div class="a" style="left:280px;top:948px;width:1px;height:20px;background:#ededed"></div>
<div class="a" style="left:257px;top:969px;width:823px;height:21px;background:#fff;border-top:1px solid #fff;border-bottom:1px solid #ededed;"></div>
<div class="cb" style="left:260px;top:972px"></div>
<div class="a" style="left:380px;top:969px;width:1px;height:20px;background:#ededed"></div>
<div class="t" style="left:287px;top:970px;width:94px;line-height:19px">11</div>
<div class="a" style="left:480px;top:969px;width:1px;height:20px;background:#ededed"></div>
<div class="t" style="left:387px;top:970px;width:94px;line-height:19px">11 ПКИ</div>
<div class="a" style="left:580px;top:969px;width:1px;height:20px;background:#ededed"></div>
<div class="t" style="left:487px;top:970px;width:94px;line-height:19px">Нет</div>
<div class="a" style="left:680px;top:969px;width:1px;height:20px;background:#ededed"></div>
<div class="t" style="left:587px;top:970px;width:94px;line-height:19px">Прямые</div>
<div class="a" style="left:780px;top:969px;width:1px;height:20px;background:#ededed"></div>
<div class="t" style="left:681px;top:970px;width:92px;text-align:right;line-height:19px">0,00</div>
<div class="a" style="left:880px;top:969px;width:1px;height:20px;background:#ededed"></div>
<div class="t" style="left:787px;top:970px;width:94px;line-height:19px">RUB</div>
<div class="a" style="left:980px;top:969px;width:1px;height:20px;background:#ededed"></div>
<div class="t" style="left:881px;top:970px;width:92px;text-align:right;line-height:19px">0,00000</div>
<div class="a" style="left:1080px;top:969px;width:1px;height:20px;background:#ededed"></div>
<div class="t" style="left:981px;top:970px;width:92px;text-align:right;line-height:19px">0,00000</div>
<div class="a" style="left:280px;top:969px;width:1px;height:20px;background:#ededed"></div>
<div class="a" style="left:257px;top:990px;width:823px;height:21px;background:#fff;border-top:1px solid #fff;border-bottom:1px solid #ededed;"></div>
<div class="cb" style="left:260px;top:993px"></div>
<div class="a" style="left:380px;top:990px;width:1px;height:20px;background:#ededed"></div>
<div class="t" style="left:287px;top:991px;width:94px;line-height:19px">12</div>
<div class="a" style="left:480px;top:990px;width:1px;height:20px;background:#ededed"></div>
<div class="t" style="left:387px;top:991px;width:94px;line-height:19px">12 Комм. расхо...</div>
<div class="a" style="left:580px;top:990px;width:1px;height:20px;background:#ededed"></div>
<div class="t" style="left:487px;top:991px;width:94px;line-height:19px">Нет</div>
<div class="a" style="left:680px;top:990px;width:1px;height:20px;background:#ededed"></div>
<div class="t" style="left:587px;top:991px;width:94px;line-height:19px">Косвенные</div>
<div class="a" style="left:780px;top:990px;width:1px;height:20px;background:#ededed"></div>
<div class="t" style="left:681px;top:991px;width:92px;text-align:right;line-height:19px">0,00</div>
<div class="a" style="left:880px;top:990px;width:1px;height:20px;background:#ededed"></div>
<div class="t" style="left:787px;top:991px;width:94px;line-height:19px">RUB</div>
<div class="a" style="left:980px;top:990px;width:1px;height:20px;background:#ededed"></div>
<div class="t" style="left:881px;top:991px;width:92px;text-align:right;line-height:19px">0,00000</div>
<div class="a" style="left:1080px;top:990px;width:1px;height:20px;background:#ededed"></div>
<div class="t" style="left:981px;top:991px;width:92px;text-align:right;line-height:19px">0,00000</div>
<div class="a" style="left:280px;top:990px;width:1px;height:20px;background:#ededed"></div>
<div class="a" style="left:257px;top:1011px;width:823px;height:21px;background:#fff;border-top:1px solid #fff;border-bottom:1px solid #ededed;"></div>
<div class="cb" style="left:260px;top:1014px"></div>
<div class="a" style="left:380px;top:1011px;width:1px;height:20px;background:#ededed"></div>
<div class="t" style="left:287px;top:1012px;width:94px;line-height:19px">14</div>
<div class="a" style="left:480px;top:1011px;width:1px;height:20px;background:#ededed"></div>
<div class="t" style="left:387px;top:1012px;width:94px;line-height:19px">14 Цена без НДС</div>
<div class="a" style="left:580px;top:1011px;width:1px;height:20px;background:#ededed"></div>
<div class="t" style="left:487px;top:1012px;width:94px;line-height:19px">Да</div>
<div class="a" style="left:680px;top:1011px;width:1px;height:20px;background:#ededed"></div>
<div class="t" style="left:587px;top:1012px;width:94px;line-height:19px">Прямые</div>
<div class="a" style="left:780px;top:1011px;width:1px;height:20px;background:#ededed"></div>
<div class="t" style="left:681px;top:1012px;width:92px;text-align:right;line-height:19px">0,00</div>
<div class="a" style="left:880px;top:1011px;width:1px;height:20px;background:#ededed"></div>
<div class="t" style="left:787px;top:1012px;width:94px;line-height:19px">RUB</div>
<div class="a" style="left:980px;top:1011px;width:1px;height:20px;background:#ededed"></div>
<div class="t" style="left:881px;top:1012px;width:92px;text-align:right;line-height:19px">0,00000</div>
<div class="a" style="left:1080px;top:1011px;width:1px;height:20px;background:#ededed"></div>
<div class="t" style="left:981px;top:1012px;width:92px;text-align:right;line-height:19px">0,00000</div>
<div class="a" style="left:280px;top:1011px;width:1px;height:20px;background:#ededed"></div>
<div class="a" style="left:257px;top:1032px;width:823px;height:21px;background:#fff;border-top:1px solid #fff;border-bottom:1px solid #ededed;"></div>
<div class="cb" style="left:260px;top:1035px"></div>
<div class="a" style="left:380px;top:1032px;width:1px;height:20px;background:#ededed"></div>
<div class="t" style="left:287px;top:1033px;width:94px;line-height:19px">1</div>
<div class="a" style="left:480px;top:1032px;width:1px;height:20px;background:#ededed"></div>
<div class="t" style="left:387px;top:1033px;width:94px;line-height:19px">01 Материалы</div>
<div class="a" style="left:580px;top:1032px;width:1px;height:20px;background:#ededed"></div>
<div class="t" style="left:487px;top:1033px;width:94px;line-height:19px">Нет</div>
<div class="a" style="left:680px;top:1032px;width:1px;height:20px;background:#ededed"></div>
<div class="t" style="left:587px;top:1033px;width:94px;line-height:19px">Прямые</div>
<div class="a" style="left:780px;top:1032px;width:1px;height:20px;background:#ededed"></div>
<div class="t" style="left:681px;top:1033px;width:92px;text-align:right;line-height:19px">0,00</div>
<div class="a" style="left:880px;top:1032px;width:1px;height:20px;background:#ededed"></div>
<div class="t" style="left:787px;top:1033px;width:94px;line-height:19px">RUB</div>
<div class="a" style="left:980px;top:1032px;width:1px;height:20px;background:#ededed"></div>
<div class="t" style="left:881px;top:1033px;width:92px;text-align:right;line-height:19px">0,00000</div>
<div class="a" style="left:1080px;top:1032px;width:1px;height:20px;background:#ededed"></div>
<div class="t" style="left:981px;top:1033px;width:92px;text-align:right;line-height:19px">0,00000</div>
<div class="a" style="left:280px;top:1032px;width:1px;height:20px;background:#ededed"></div>
<div class="a" style="left:257px;top:1053px;width:823px;height:21px;background:#fff;border-top:1px solid #fff;border-bottom:1px solid #ededed;"></div>
<div class="cb" style="left:260px;top:1056px"></div>
<div class="a" style="left:380px;top:1053px;width:1px;height:20px;background:#ededed"></div>
<div class="t" style="left:287px;top:1054px;width:94px;line-height:19px">3</div>
<div class="a" style="left:480px;top:1053px;width:1px;height:20px;background:#ededed"></div>
<div class="t" style="left:387px;top:1054px;width:94px;line-height:19px">03 Осн. оплата...</div>
<div class="a" style="left:580px;top:1053px;width:1px;height:20px;background:#ededed"></div>
<div class="t" style="left:487px;top:1054px;width:94px;line-height:19px">Нет</div>
<div class="a" style="left:680px;top:1053px;width:1px;height:20px;background:#ededed"></div>
<div class="t" style="left:587px;top:1054px;width:94px;line-height:19px">Прямые</div>
<div class="a" style="left:780px;top:1053px;width:1px;height:20px;background:#ededed"></div>
<div class="t" style="left:681px;top:1054px;width:92px;text-align:right;line-height:19px">0,00</div>
<div class="a" style="left:880px;top:1053px;width:1px;height:20px;background:#ededed"></div>
<div class="t" style="left:787px;top:1054px;width:94px;line-height:19px">RUB</div>
<div class="a" style="left:980px;top:1053px;width:1px;height:20px;background:#ededed"></div>
<div class="t" style="left:881px;top:1054px;width:92px;text-align:right;line-height:19px">0,00000</div>
<div class="a" style="left:1080px;top:1053px;width:1px;height:20px;background:#ededed"></div>
<div class="t" style="left:981px;top:1054px;width:92px;text-align:right;line-height:19px">0,00000</div>
<div class="a" style="left:280px;top:1053px;width:1px;height:20px;background:#ededed"></div>
<div class="a" style="left:257px;top:1074px;width:823px;height:21px;background:#fff;border-top:1px solid #fff;border-bottom:1px solid #ededed;"></div>
<div class="cb" style="left:260px;top:1077px"></div>
<div class="a" style="left:380px;top:1074px;width:1px;height:20px;background:#ededed"></div>
<div class="t" style="left:287px;top:1075px;width:94px;line-height:19px">6</div>
<div class="a" style="left:480px;top:1074px;width:1px;height:20px;background:#ededed"></div>
<div class="t" style="left:387px;top:1075px;width:94px;line-height:19px">06 Расходы на ...</div>
<div class="a" style="left:580px;top:1074px;width:1px;height:20px;background:#ededed"></div>
<div class="t" style="left:487px;top:1075px;width:94px;line-height:19px">Нет</div>
<div class="a" style="left:680px;top:1074px;width:1px;height:20px;background:#ededed"></div>
<div class="t" style="left:587px;top:1075px;width:94px;line-height:19px">Прямые</div>
<div class="a" style="left:780px;top:1074px;width:1px;height:20px;background:#ededed"></div>
<div class="t" style="left:681px;top:1075px;width:92px;text-align:right;line-height:19px">0,00</div>
<div class="a" style="left:880px;top:1074px;width:1px;height:20px;background:#ededed"></div>
<div class="t" style="left:787px;top:1075px;width:94px;line-height:19px">RUB</div>
<div class="a" style="left:980px;top:1074px;width:1px;height:20px;background:#ededed"></div>
<div class="t" style="left:881px;top:1075px;width:92px;text-align:right;line-height:19px">0,00000</div>
<div class="a" style="left:1080px;top:1074px;width:1px;height:20px;background:#ededed"></div>
<div class="t" style="left:981px;top:1075px;width:92px;text-align:right;line-height:19px">0,00000</div>
<div class="a" style="left:280px;top:1074px;width:1px;height:20px;background:#ededed"></div>
<svg class="a" style="left:251px;top:655px" width="5" height="36"><path d="M0.5 5L5 1V35L0.5 31Z" fill="#e9e9e9"/><path d="M3.2 13V19.5L0.6 16.2Z" fill="#222"/></svg>
<div class="a" style="left:509px;top:700px;width:264px;height:342px;background:#f0f0f0;border:1px solid #a3bfe6;box-shadow:-1px 3px 5px 1px rgba(0,0,0,0.17);overflow:visible"></div>
<div class="a" style="left:536px;top:701px;width:1px;height:340px;background:#e0e0e0"></div>
<div class="a" style="left:537px;top:701px;width:1px;height:340px;background:#fff"></div>
<svg class="a" style="left:515px;top:707px" width="16" height="16" viewBox="0 0 16 16"><defs><linearGradient id="dg1" x1="0" y1="0" x2="1" y2="1"><stop offset="0" stop-color="#ffffff"/><stop offset="1" stop-color="#dfeeee"/></linearGradient></defs><path d="M2.5 0.5H10L13.5 4V15.5H2.5Z" fill="url(#dg1)" stroke="#8d9b9e"/><path d="M10 0.5V4H13.5" fill="#fff" stroke="#8d9b9e"/><path d="M2 16H14" stroke="#c8c8c8"/></svg>
<div class="t" style="left:543px;top:709px;line-height:14px;color:#222;">Добавить...</div>
<div class="t" style="left:640px;width:114px;text-align:right;top:708px;line-height:14px;color:#222;">Ins</div>
<svg class="a" style="left:515px;top:732px" width="16" height="16" viewBox="0 0 16 16"><path d="M2.5 0.5H10L13.5 4V15.5H2.5Z" fill="url(#dg1)" stroke="#8d9b9e"/><path d="M10 0.5V4H13.5" fill="#fff" stroke="#8d9b9e"/><path d="M2 16H14" stroke="#c8c8c8"/><path d="M12.5 9V15.2M9.4 12.1H15.6" stroke="#1a9a1a" stroke-width="2.8"/><path d="M12.5 9.8V14.4M10.2 12.1H14.8" stroke="#4fd04f" stroke-width="1.2"/></svg>
<div class="t" style="left:543px;top:734px;line-height:14px;color:#222;">Размножить...</div>
<div class="t" style="left:640px;width:114px;text-align:right;top:733px;line-height:14px;color:#222;">Ctrl+F3</div>
<svg class="a" style="left:515px;top:757px" width="16" height="16" viewBox="0 0 16 16"><path d="M4.5 0.5H12L15.5 4V15.5H4.5Z" fill="url(#dg1)" stroke="#8d9b9e"/><path d="M12 0.5V4H15.5" fill="#fff" stroke="#8d9b9e"/><rect x="0.5" y="5.5" width="10" height="6" fill="#fbfbfb" stroke="#8a8a8a"/><rect x="2" y="7.3" width="5" height="2.2" fill="#2a4fd6"/><path d="M8.5 2.5V14M7 2.5H10M7 14H10" stroke="#333" stroke-width="0.9"/></svg>
<div class="t" style="left:543px;top:759px;line-height:14px;color:#222;font-weight:bold;font-size:11.5px;">Исправить...</div>
<div class="t" style="left:640px;width:114px;text-align:right;top:758px;line-height:14px;color:#222;font-weight:bold;font-size:11.5px;">F2</div>
<svg class="a" style="left:515px;top:782px" width="16" height="16" viewBox="0 0 16 16"><path d="M2.5 0.5H10L13.5 4V15.5H2.5Z" fill="url(#dg1)" stroke="#8d9b9e"/><path d="M10 0.5V4H13.5" fill="#fff" stroke="#8d9b9e"/><path d="M2 16H14" stroke="#c8c8c8"/><rect x="9" y="11.5" width="6.5" height="2.6" rx="0.8" fill="#e04848" stroke="#b02020" stroke-width="0.7"/></svg>
<div class="t" style="left:543px;top:784px;line-height:14px;color:#222;">Удалить</div>
<div class="t" style="left:640px;width:114px;text-align:right;top:783px;line-height:14px;color:#222;">Del</div>
<div class="a" style="left:512px;top:805px;width:258px;height:1px;background:#e0e0e0"></div>
<div class="a" style="left:512px;top:806px;width:258px;height:1px;background:#fff"></div>
<svg class="a" style="left:515px;top:813px" width="16" height="16" viewBox="0 0 16 16"><path d="M12.8 4.6C10.8 0.8 5.2 0.6 3.2 5.2" stroke="#46c046" stroke-width="2.8" fill="none"/><path d="M0 3.2L6.8 6.6L1.2 10.2Z" fill="#46c046"/><path d="M3.2 11.4C5.2 15.2 10.8 15.4 12.8 10.8" stroke="#229a22" stroke-width="2.8" fill="none"/><path d="M16 12.8L9.2 9.4L14.8 5.8Z" fill="#229a22"/></svg>
<div class="t" style="left:543px;top:815px;line-height:14px;color:#222;">Обновить</div>
<div class="t" style="left:640px;width:114px;text-align:right;top:814px;line-height:14px;color:#222;">F5</div>
<div class="a" style="left:512px;top:836px;width:258px;height:1px;background:#e0e0e0"></div>
<div class="a" style="left:512px;top:837px;width:258px;height:1px;background:#fff"></div>
<div class="t" style="left:543px;top:846px;line-height:14px;color:#222;">Действующая...</div>
<div class="t" style="left:543px;top:871px;line-height:14px;color:#222;">Состояние</div>
<svg class="a" style="left:758px;top:872px" width="6" height="10"><defs><linearGradient id="ar" x1="0" y1="0" x2="1" y2="1"><stop offset="0" stop-color="#7fb2f0"/><stop offset="1" stop-color="#2a6fd0"/></linearGradient></defs><path d="M0.3 0.3L5.6 4.9L0.3 9.6Z" fill="url(#ar)"/></svg>
<div class="a" style="left:512px;top:892px;width:258px;height:1px;background:#e0e0e0"></div>
<div class="a" style="left:512px;top:893px;width:258px;height:1px;background:#fff"></div>
<div class="t" style="left:543px;top:902px;line-height:14px;color:#222;">ЦИТК. Пересчитать косвенные затраты...</div>
<div class="t" style="left:543px;top:927px;line-height:14px;color:#222;">ЦИТК. Сформировать...</div>
<div class="a" style="left:512px;top:948px;width:258px;height:1px;background:#e0e0e0"></div>
<div class="a" style="left:512px;top:949px;width:258px;height:1px;background:#fff"></div>
<svg class="a" style="left:515px;top:956px" width="16" height="16" viewBox="0 0 16 16"><path d="M1.5 2.5H6.5L8.5 4.5V11H1.5Z" fill="#fbfdff" stroke="#6a7fa6"/><path d="M8 8.5H14.5V15.5H8Z" fill="#f2f8ff" stroke="#6a7fa6"/><path d="M4.5 10.5Q5 14 7.5 15.5" fill="none" stroke="#1f9e1f" stroke-width="2.6"/><path d="M0.8 10.8L4.5 6.5L8.2 10.8Z" fill="#4fcf3f" stroke="#1f9e1f" stroke-width="0.8"/><path d="M9.5 2Q11.5 3.5 11.5 7.5" fill="none" stroke="#1f9e1f" stroke-width="2.6"/><path d="M8.3 7.3L11.5 11.5L15.2 7.3Z" fill="#4fcf3f" stroke="#1f9e1f" stroke-width="0.8"/></svg>
<div class="t" style="left:543px;top:958px;line-height:14px;color:#222;">Обмен</div>
<svg class="a" style="left:758px;top:959px" width="6" height="10"><defs><linearGradient id="ar" x1="0" y1="0" x2="1" y2="1"><stop offset="0" stop-color="#7fb2f0"/><stop offset="1" stop-color="#2a6fd0"/></linearGradient></defs><path d="M0.3 0.3L5.6 4.9L0.3 9.6Z" fill="url(#ar)"/></svg>
<div class="a" style="left:512px;top:979px;width:258px;height:1px;background:#e0e0e0"></div>
<div class="a" style="left:512px;top:980px;width:258px;height:1px;background:#fff"></div>
<svg class="a" style="left:515px;top:987px" width="16" height="16" viewBox="0 0 16 16"><defs><linearGradient id="cbg" x1="0" y1="0" x2="1" y2="1"><stop offset="0" stop-color="#d2d5da"/><stop offset="1" stop-color="#fafafa"/></linearGradient></defs><rect x="1.5" y="2.5" width="12" height="12" fill="url(#cbg)" stroke="#858585"/><rect x="2.5" y="3.5" width="10" height="10" fill="none" stroke="#fff"/></svg>
<div class="t" style="left:543px;top:989px;line-height:14px;color:#222;">Панель инструментов</div>
<div class="a" style="left:512px;top:1010px;width:258px;height:1px;background:#e0e0e0"></div>
<div class="a" style="left:512px;top:1011px;width:258px;height:1px;background:#fff"></div>
<svg class="a" style="left:515px;top:1018px" width="16" height="16" viewBox="0 0 16 16"><path d="M2.2 13.8L7.6 8.4" stroke="#5d8ad2" stroke-width="4.8" stroke-linecap="round"/><path d="M2.2 13.8L7.6 8.4" stroke="#a9c7f2" stroke-width="2.4" stroke-linecap="round"/><path d="M7.5 8.5L10 6" stroke="#8c8c8c" stroke-width="2.8"/><circle cx="11.8" cy="4.4" r="3.4" fill="#c4c4c4" stroke="#858585" stroke-width="0.9"/><path d="M11 -0.5L12.3 3.2L16.5 3.6L16.5 -0.5Z" fill="#f0f0f0"/><circle cx="12.3" cy="3.6" r="1.2" fill="#f0f0f0"/></svg>
<div class="t" style="left:543px;top:1020px;line-height:14px;color:#222;">Настройки...</div>
<div class="t" style="left:640px;width:114px;text-align:right;top:1019px;line-height:14px;color:#222;">Alt+Enter</div>
<div class="a" style="left:534px;top:834px;width:242px;height:35px;border:5px solid #ff0000;border-radius:11px;background:transparent"></div></body></html>
